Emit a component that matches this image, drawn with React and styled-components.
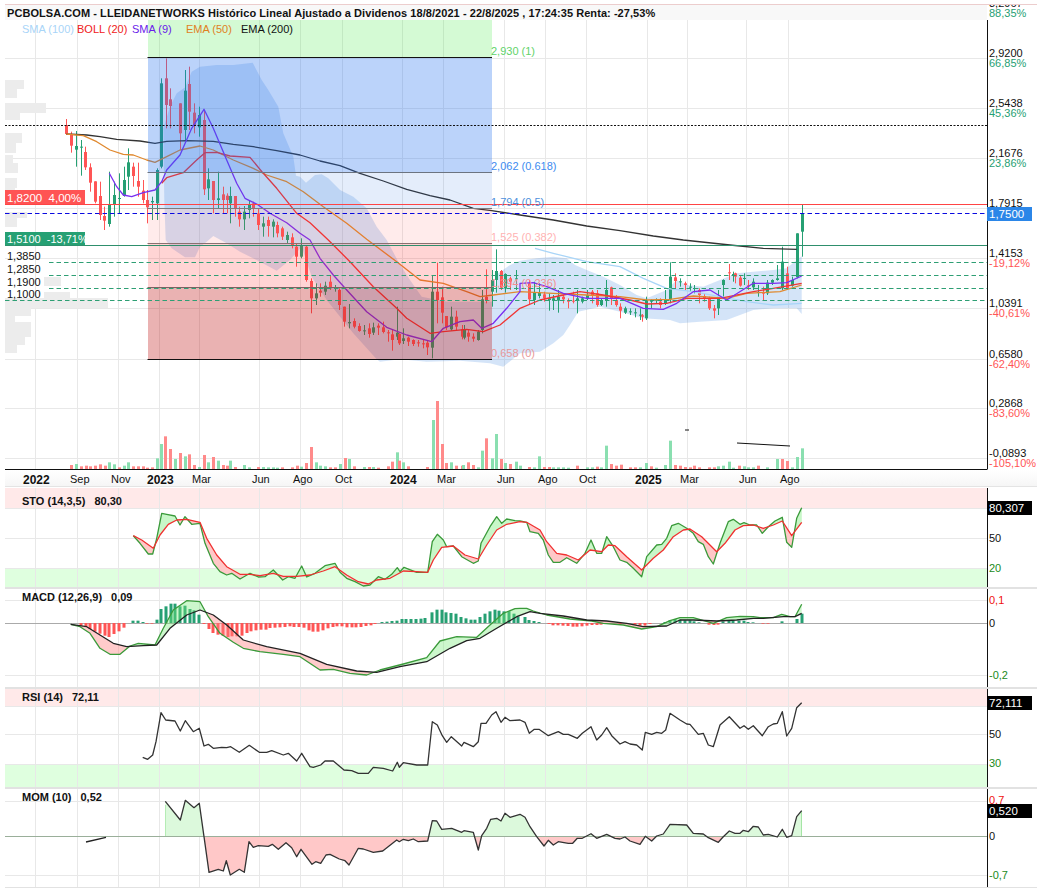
import React from "react";
import styled, { createGlobalStyle } from "styled-components";

const GREEN = "#26a073";
const RED = "#ff5555";
const GRID = "#e8e8e8";
const GRID_X = [35, 77, 118, 159, 199, 259, 300, 342, 402, 443, 504, 545, 586, 647, 687, 746, 788];
const AXIS_X = 987.5;

// traces were read off the picture at 3x, "x,y x,y ..." with an offset per block
const trace = (s, dx = 0, dy = 0) =>
    s
        .trim()
        .split(/\s+/)
        .map((p) => {
            const [x, y] = p.split(",").map(Number);
            return [(x + dx) / 3, (y + dy) / 3];
        });
const toPath = (pts) => pts.map((p, i) => (i ? "L" : "M") + p[0].toFixed(1) + " " + p[1].toFixed(1)).join("");
const at = (pts, x) => {
    if (x <= pts[0][0]) return pts[0][1];
    for (let i = 1; i < pts.length; i++) {
        if (x <= pts[i][0]) {
            const t = (x - pts[i - 1][0]) / (pts[i][0] - pts[i - 1][0] || 1);
            return pts[i - 1][1] + (pts[i][1] - pts[i - 1][1]) * t;
        }
    }
    return pts[pts.length - 1][1];
};

const candles = (s, dx = 0, dy = 0) =>
    s
        .trim()
        .split("\n")
        .map((l) => {
            const [c, x, top, bot, hi, lo] = l.trim().split(" ");
            return {
                color: c === "g" ? GREEN : RED,
                x: Math.round((+x + dx) / 3),
                top: (+top + dy) / 3,
                bot: (+bot + dy) / 3,
                hi: (+hi + dy) / 3,
                lo: (+lo + dy) / 3,
            };
        });

const CANDLES = [
    ...candles(`r 199 375 402 357 405
r 214 405 437 395 458
g 228 438 449 393 500
g 242 440 443 420 527
r 256 456 502 440 510
r 270 502 548 490 575
r 285 544 605 544 610
r 299 588 645 545 660
r 313 648 662 620 690
g 328 615 672 515 680
g 343 585 612 545 650
g 356 594 597 520 640
g 371 540 588 500 590
g 385 487 530 445 570
r 400 500 528 488 560
r 414 543 560 488 590
r 428 572 600 540 610
r 442 600 622 570 670
g 457 603 607 590 660
g 470 510 610 505 660
g 484 250 500 235 505
r 497 235 315 175 385
r 511 298 318 265 385
r 541 310 400 310 450
g 556 272 390 210 420
r 568 252 335 200 390
r 582 338 375 310 400
g 597 345 382 320 410
r 612 360 568 330 585
g 625 538 565 505 600
r 640 543 600 545 640
g 655 595 600 515 625
r 669 583 600 560 640
r 681 587 600 580 640
g 691 588 610 560 670
r 706 588 625 588 650
r 718 635 658 620 680
g 733 635 658 618 690
g 747 615 630 600 655
r 760 610 625 605 650
r 775 640 675 625 690
g 790 670 680 650 710
r 804 660 678 650 710
g 818 665 680 658 712
r 832 675 700 665 712
r 847 685 710 680 720
g 862 705 720 695 730
r 876 712 735 700 745`),
    ...candles(
        `r 888 20 50 10 80
g 904 15 50 -5 55
r 918 20 120 15 125
r 934 123 175 115 220
g 947 160 175 130 195
r 961 152 158 130 170
g 976 137 155 125 165
r 991 125 145 108 150
g 1004 144 147 135 155
r 1018 150 195 145 210
r 1033 200 245 200 260
g 1048 246 250 192 265
r 1063 243 260 235 265
r 1077 258 273 250 275
g 1091 271 273 255 285
r 1106 265 282 250 293
g 1120 262 278 248 285
r 1134 257 263 250 285
r 1148 262 276 245 280
r 1163 277 280 270 305
r 1177 283 300 270 332
g 1192 278 290 200 300
r 1198 282 310 280 315
g 1210 295 303 265 312
r 1225 293 305 290 318
r 1240 300 312 298 318
r 1254 307 310 300 320
r 1268 310 312 300 325
r 1282 308 322 300 345
g 1297 155 323 105 355
r 1312 155 180 68 250
r 1325 172 218 140 250
r 1339 228 262 228 270
g 1354 230 268 200 272
r 1368 230 260 212 270
r 1385 268 290 255 298
g 1392 270 293 255 298
r 1405 278 290 270 305
r 1420 290 296 280 305
g 1435 275 300 270 302
g 1445 178 270 150 280
r 1459 170 180 88 190
g 1475 120 155 90 200
g 1489 93 120 28 158
r 1504 93 143 90 150
g 1516 102 145 100 158
r 1531 115 125 110 150
g 1547 115 118 90 150`,
        0,
        720
    ),
    ...candles(
        `r 28 130 178 120 195
g 43 157 180 125 195
g 57 158 168 130 175
r 72 163 175 155 185
g 86 175 180 160 212
g 100 175 182 165 210
g 115 170 182 150 218
r 129 170 178 165 190
r 144 180 185 175 205
r 158 182 185 155 190
g 172 175 182 150 220
g 187 175 185 170 190
g 201 165 175 150 180
r 216 155 165 150 190
r 230 160 195 150 200
g 244 180 195 175 198
g 258 150 180 120 200
r 273 142 175 140 195
r 287 180 195 165 200
r 301 200 212 190 235
g 316 205 218 200 222
g 330 214 217 205 225
g 345 217 219 205 232
g 359 224 226 205 240
r 367 226 230 222 245
g 378 180 235 170 240
g 392 182 185 178 205
g 407 179 182 175 190
r 421 185 195 175 205
g 436 180 192 150 195
g 451 110 178 67 190
r 466 112 123 100 150
g 480 124 127 115 140
r 494 130 135 125 150
g 509 140 143 130 155
g 523 144 147 135 160
r 537 150 165 145 190
r 551 168 175 160 185
r 566 175 205 170 210
r 581 205 212 195 235
g 595 170 205 150 225
g 610 120 135 118 170
r 626 97 100 72 120
g 640 102 105 95 125
r 645 100 110 98 130
r 659 113 137 108 140
g 671 114 117 100 135
r 685 136 139 120 150
g 699 125 142 115 150
g 713 156 159 135 170
r 728 158 161 140 180
g 742 128 160 120 165
g 757 120 128 118 135
g 772 115 120 75 122
g 787 65 145 20 150
r 801 100 145 80 150
g 815 120 137 110 140
g 830 -20 112 -20 115
g 845 -80 -25 -107 50`,
        1560,
        720
    ),
];

const bars = (s, dx = 0) =>
    s
        .trim()
        .split(/\s+/)
        .map((b) => {
            const [c, x, h] = b.split(":");
            return { g: c === "g", x: Math.round((+x + dx) / 3), h: +h / 3 };
        });

const VOLUME = [
    ...bars(`r:214:12 g:229:15 r:243:8 r:257:10 r:271:8 r:286:10 r:300:14 r:314:10 g:328:20 g:343:14 r:357:5 g:371:10 g:385:20 r:400:8 r:414:8 r:428:8 r:442:4 r:457:5
g:470:32 g:484:75 r:496:98 r:511:60 g:526:30 r:541:48 g:556:38 r:568:44 r:583:12 g:597:6 r:612:42 g:625:20 r:640:36 g:655:25 r:669:12 r:680:10 g:691:25 r:706:6 g:733:12 g:747:5
r:775:6 g:790:6 g:804:5 g:818:5 g:832:4 r:847:5 r:876:5 r:890:10 g:904:7 r:918:18 r:934:66 g:947:20 g:961:10 g:976:8 r:991:5 r:1005:5 g:1019:15 r:1034:33 g:1048:30 r:1063:8
g:1092:6 r:1106:6 g:1120:6 r:1134:4 r:1163:8 r:1177:22 g:1192:50 r:1198:25 g:1210:20 r:1225:8 r:1282:6 g:1298:147 r:1312:204 r:1325:75 r:1339:18 g:1354:20 r:1368:10 r:1385:10 g:1390:12
r:1405:20 r:1420:12 g:1435:5 g:1445:55 r:1459:92 g:1475:32 g:1489:105 r:1504:30 g:1516:18 r:1531:15 g:1547:22`),
    ...bars(
        `g:0:10 r:28:6 g:43:5 g:57:38 r:72:6 r:86:6 g:100:5 g:115:5 g:130:5 g:144:4 r:172:10 g:201:5 g:216:5 r:230:7 g:244:5 g:259:70 r:273:15 r:287:10 r:302:13 r:330:5 r:345:5 g:359:5 g:377:18
r:392:8 g:407:4 g:436:12 g:451:85 r:466:12 r:480:10 r:494:6 r:509:5 r:523:10 r:537:5 r:566:5 r:581:5 g:595:8 g:610:10 g:626:22 g:640:4 r:656:10 g:671:8 g:685:5 g:699:5 r:714:10 g:742:5 g:772:30 r:787:30 r:801:24 g:815:5 g:830:36 g:845:62`,
        1560
    ),
];

const HIST = [
    ...bars(`r:243:8 r:257:12 r:271:18 r:286:26 r:300:32 r:314:38 r:328:42 r:343:33 r:357:25 r:371:14 g:400:7 g:414:7 g:428:3 r:442:2 r:457:2 g:470:10 g:484:42 g:498:50 g:512:58 g:526:58 g:540:50 g:555:52 g:569:42 g:583:38 g:597:25
r:612:3 r:626:18 r:640:30 r:655:35 r:669:38 r:683:42 r:697:40 r:711:40 r:725:38 r:740:30 r:754:25 r:768:22 r:783:20 r:797:20 r:811:15 r:826:14 r:840:13 r:855:12 r:869:10 r:883:12 r:897:12 r:911:14 r:926:22 r:940:26 r:955:26 r:969:22 r:983:16 r:998:12
r:1012:10 r:1026:10 r:1040:13 r:1055:13 r:1069:13 r:1083:12 r:1097:9 r:1112:7 r:1126:3 g:1147:3 g:1161:4 g:1175:6 g:1190:7 g:1205:12 g:1219:12 g:1233:12 g:1247:12 g:1262:13 g:1276:15 g:1297:32 g:1311:40 g:1325:40 g:1339:32 g:1353:30 g:1368:28 g:1383:18 g:1397:14 g:1412:10 g:1425:10 g:1440:18 g:1454:28 g:1469:35 g:1484:40 g:1498:37 g:1513:35 g:1527:35 g:1541:28 g:1555:20`),
    ...bars(
        `g:15:18 g:28:9 g:43:6 g:57:3 r:86:3 r:100:7 r:115:7 r:130:8 r:144:9 r:158:11 r:172:11 r:187:10 r:201:8 r:216:6 r:230:6 r:244:5 r:301:5 r:345:5 r:360:8 r:375:8 r:390:3 g:435:3 g:450:8 g:465:12 g:480:10 g:494:8 g:509:8 g:523:5 g:537:2 r:566:5 r:581:6 r:595:5 g:610:5 g:626:8 g:640:8 g:656:7 g:671:7 g:685:3 g:699:2 r:730:2 r:743:2 g:787:5 g:830:12 g:845:28`,
        1560
    ),
];

const BAND_UPPER = [
    ...trace("490,385 510,320 530,280 556,262 575,215 600,200 650,195 700,195 758,188 785,240 805,270 835,320 850,400 880,470 888,527 900,530 918,548 945,525 965,523 985,535 1020,570 1060,590 1100,625 1130,680 1160,720"),
    ...trace("1195,65 1230,120 1265,170 1340,185 1475,185 1495,100 1530,75 1560,62", 0, 720),
    ...trace("50,55 100,50 140,55 165,75 200,90 250,110 300,135 350,165 380,175 440,150 470,120 500,135 550,140 600,120 650,100 700,95 760,90 800,85 830,60 845,48", 1560, 720),
];
const BAND_LOWER = [
    ...trace("490,385 493,600 497,720"),
    ...trace("515,25 555,52 585,52 600,20 620,5 640,-12 680,10 720,35 780,65 830,92 870,60 905,20 935,110 980,180 1060,280 1130,358 1140,365 1200,358 1280,365 1380,362 1470,370 1510,380 1560,340", 0, 720),
    ...trace("60,335 100,310 130,285 150,255 175,215 240,200 300,215 370,235 450,240 480,250 540,245 620,240 660,225 700,210 760,205 800,205 830,205 845,222", 1560, 720),
];

const EMA200 = [
    ...trace("199,402 260,405 300,410 350,418 420,423 465,430 500,424 560,422 640,424 700,433 760,440 830,452 900,465 960,483 1020,497 1080,520 1150,543 1220,568 1290,587 1350,600 1420,625 1475,632 1560,645"),
    ...trace("100,660 200,678 300,692 400,708 490,720 630,735 730,745 830,748", 1560),
];
const EMA50 = [
    ...trace("199,402 250,407 290,425 330,450 370,463 400,465 440,480 465,487 500,470 540,450 600,438 640,450 700,480 760,505 800,525 860,545 910,575 970,620 1040,670 1100,718"),
    ...trace("1190,65 1260,120 1330,130 1400,155 1440,170 1480,165 1560,155", 0, 720),
    ...trace("100,160 200,165 300,170 380,180 450,178 520,168 620,175 680,160 780,155 845,135", 1560, 720),
];
const BOLL = [
    ...trace("485,550 500,533 550,518 590,480 615,458 650,457 690,468 750,472 790,520 830,565 890,640 930,668 985,720"),
    ...trace("1050,65 1120,140 1190,205 1220,235 1290,280 1330,275 1400,268 1450,275 1500,255 1560,205", 0, 720),
    ...trace("60,180 130,165 180,155 250,165 330,180 380,192 440,190 500,175 600,175 700,155 760,145 845,130", 1560, 720),
];
const SMA9 = [
    ...trace("328,520 350,560 370,585 395,590 430,578 465,570 485,545 500,510 540,465 575,385 612,328 640,385 680,480 710,550 735,595 770,612 810,640 860,668 900,700 930,720"),
    ...trace("960,55 1000,105 1040,150 1100,215 1160,262 1220,285 1295,305 1330,265 1380,245 1420,240 1445,265 1480,250 1520,205 1560,155", 0, 720),
    ...trace("0,130 40,128 80,140 130,160 200,175 300,175 370,205 430,208 470,190 520,155 570,150 620,180 700,130 760,130 800,128 845,108", 1560, 720),
];
const SMA100 = trace("45,25 100,40 200,65 300,80 370,115 440,145 520,155 600,170 680,185 760,195 845,190", 1560, 720);

const STO_FAST = [
    ...trace("400,152 420,175 445,207 458,207 470,160 485,85 500,88 525,93 540,120 555,95 575,118 600,115 615,175 640,235 660,260 680,270 695,265 720,282 750,265 775,276 795,275 820,255 848,285 865,275 885,280 905,243 920,276 945,265 975,242 1005,235 1020,262 1040,280 1065,290 1090,303 1110,300 1135,275 1155,283 1175,268 1192,248 1200,260 1212,247 1250,262 1283,262 1297,170 1312,148 1330,165 1340,185 1360,183 1385,215 1420,235 1435,228 1443,175 1470,125 1490,95 1505,115 1520,102 1545,107", 0, 1455),
    ...trace("0,108 20,112 30,140 55,145 70,165 85,210 100,232 120,232 140,218 170,235 195,205 213,165 230,205 245,205 260,155 280,185 300,225 320,232 340,250 365,275 380,215 410,180 425,178 440,160 455,122 475,115 500,130 520,145 535,170 550,178 565,215 580,237 600,175 625,110 640,103 660,118 672,113 690,120 710,120 727,145 745,125 765,108 787,97 800,172 815,187 830,100 845,68", 1560, 1455),
];
const STO_SLOW = [
    ...trace("400,152 425,165 460,190 480,150 505,118 530,105 560,103 600,112 620,160 650,210 680,245 720,268 750,268 780,272 820,265 850,274 890,274 930,270 970,258 1005,245 1040,270 1075,290 1105,297 1130,285 1170,280 1210,258 1250,260 1283,262 1300,225 1325,187 1360,183 1395,210 1435,222 1460,180 1490,135 1520,118", 0, 1455),
    ...trace("0,110 20,112 60,135 80,170 110,205 140,210 175,225 210,195 245,200 265,180 285,182 320,215 365,255 400,220 430,195 460,155 490,135 510,132 545,155 590,200 615,175 645,135 670,122 700,120 730,130 760,120 787,108 815,152 845,112", 1560, 1455),
];
const MACD_LINE = [
    ...trace("212,418 240,425 270,445 300,490 330,508 360,508 390,483 415,475 465,480 490,430 520,375 560,347 600,350 625,395 660,445 700,472 730,490 780,500 850,508 900,515 960,555 1000,553 1050,565 1100,570 1140,555 1210,537 1280,518 1320,468 1370,455 1430,457 1470,420 1510,385 1545,371", 0, 1455),
    ...trace("0,370 20,370 40,378 80,390 150,402 215,408 250,415 310,420 365,432 410,425 450,407 480,398 520,398 580,415 620,398 660,394 700,395 720,398 760,398 785,388 810,395 825,395 845,358", 1560, 1455),
];
const MACD_SIGNAL = [
    ...trace("212,418 260,425 300,450 340,475 380,485 430,482 470,480 510,430 560,390 600,375 640,390 680,420 730,465 800,485 900,505 980,538 1070,558 1130,562 1200,545 1280,530 1350,490 1400,467 1440,460 1490,430 1550,395", 0, 1455),
    ...trace("30,380 60,385 130,393 200,405 260,408 320,415 370,425 440,423 480,405 520,405 590,408 650,405 700,400 730,400 790,395 825,395 845,385", 1560, 1455),
];
const RSI_LINE = [
    ...trace("428,217 443,223 458,210 468,170 483,83 497,105 525,108 541,138 556,107 580,140 598,130 612,183 625,178 640,190 665,187 680,188 692,185 718,202 748,181 778,202 800,202 815,197 850,210 865,205 890,228 905,205 930,245 940,247 962,240 975,228 1000,228 1032,255 1055,257 1075,265 1105,265 1120,247 1150,250 1178,258 1192,232 1198,247 1210,233 1250,240 1283,240 1297,110 1312,120 1327,152 1340,172 1354,155 1385,183 1392,172 1420,185 1435,170 1443,115 1458,115 1475,90 1488,80 1503,112 1515,97 1530,107", 0, 2055),
    ...trace("0,105 15,112 28,145 43,133 57,133 85,152 115,140 130,148 145,148 172,160 187,145 213,125 230,165 245,150 260,128 275,152 300,177 315,170 330,177 350,180 367,195 376,142 395,148 410,142 425,145 437,135 450,85 480,105 500,117 510,118 535,148 550,145 565,180 580,185 600,120 628,95 660,130 672,122 685,133 700,122 727,152 745,125 760,117 772,115 787,80 800,153 815,130 830,68 845,53", 1560, 2055),
];
const MOM_LINE = [
    ...trace("496,349 541,405 556,346 582,368 598,355 612,455 627,562 655,553 670,558 679,527 691,570 718,553 733,562 747,470 760,487 775,482 805,484 817,478 835,493 858,473 875,488 890,515 903,493 936,538 947,530 962,535 978,510 990,508 1018,522 1035,527 1047,540 1075,490 1090,492 1120,502 1148,498 1190,465 1198,470 1210,463 1225,467 1240,462 1255,470 1283,468 1297,407 1310,408 1325,433 1355,430 1385,442 1392,437 1420,442 1435,495 1445,452 1460,430 1472,403 1490,400 1503,408 1515,385 1530,397", 0, 2055),
    ...trace("0,388 15,397 30,425 50,455 72,483 85,466 100,480 115,470 145,475 158,475 172,460 187,460 213,446 230,460 260,448 285,460 300,462 315,456 330,468 360,478 376,454 395,468 410,453 430,447 450,418 500,420 520,445 550,447 565,458 595,472 610,455 628,438 645,445 660,445 670,436 685,440 700,424 715,426 730,450 745,448 772,456 787,433 800,457 815,452 830,395 845,377", 1560, 2055),
];

const PROFILE = [
    [80, 89, 19], [89, 98, 12], [103, 113, 41], [113, 120, 15], [133, 143, 17], [143, 153, 11], [155, 163, 8], [163, 173, 13], [178, 188, 12], [188, 198, 10], [212, 218, 22], [218, 227, 12],
    [298, 308, 103], [307, 316, 26], [316, 322, 10], [322, 330, 26], [330, 337, 26], [337, 345, 20], [345, 353, 12],
];
const PROFILE_EXTRA = [[277, 286, 44, 61], [292, 299, 44, 70]];

const ZONES = [
    { y: 20, h: 38, fill: "rgba(50,230,50,.21)" },
    { y: 58, h: 115, fill: "rgba(30,110,240,.3)" },
    { y: 173, h: 35, fill: "rgba(30,110,220,.12)" },
    { y: 208, h: 36, fill: "rgba(255,60,60,.1)" },
    { y: 244, h: 44, fill: "rgba(255,40,40,.2)" },
    { y: 288, h: 71, fill: "rgba(190,20,20,.33)" },
];
const FIB_LEVELS = [
    { y: 57.5, color: "#111" },
    { y: 172.5, color: "#6c7480" },
    { y: 208.5, color: "#7c7c80" },
    { y: 243.5, color: "#8a7070" },
    { y: 287.5, color: "#7d6262" },
    { y: 359.5, color: "#111" },
];
const FIB_LABELS = [
    { y: 55, text: "2,930 (1)", color: "#5fd36a" },
    { y: 170, text: "2,062 (0.618)", color: "#3d8bf0" },
    { y: 206, text: "1,794 (0.5)", color: "#4d8fdc" },
    { y: 241, text: "1,525 (0.382)", color: "#ffb3b3" },
    { y: 287, text: "1,394 (0.236)", color: "#f58f8f" },
    { y: 357, text: "0,658 (0)", color: "#e89898" },
];
const PRICE_AXIS = [
    { y: 57, price: "2,9200", pct: "66,85%", up: true },
    { y: 107, price: "2,5438", pct: "45,36%", up: true },
    { y: 157, price: "2,1676", pct: "23,86%", up: true },
    { y: 207, price: "1,7915" },
    { y: 257, price: "1,4153", pct: "-19,12%" },
    { y: 307, price: "1,0391", pct: "-40,61%" },
    { y: 358, price: "0,6580", pct: "-62,40%" },
    { y: 407, price: "0,2868", pct: "-83,60%" },
    { y: 457, price: "-0,0893", pct: "-105,10%" },
];
const LEFT_LEVELS = [
    { y: 260, text: "1,3850" },
    { y: 273, text: "1,2850" },
    { y: 286, text: "1,1900" },
    { y: 298, text: "1,1000" },
];
const LEGEND = [
    { text: "SMA (100)", color: "#a9d5f8", w: 55 },
    { text: "BOLL (20)", color: "#f02020", w: 55 },
    { text: "SMA (9)", color: "#6a1bea", w: 54 },
    { text: "EMA (50)", color: "#e0801f", w: 55 },
    { text: "EMA (200)", color: "#111", w: 60 },
];
const MONTHS = [
    { x: 23, t: "2022", b: 1 }, { x: 70, t: "Sep" }, { x: 111, t: "Nov" }, { x: 147, t: "2023", b: 1 }, { x: 192, t: "Mar" }, { x: 252, t: "Jun" },
    { x: 293, t: "Ago" }, { x: 335, t: "Oct" }, { x: 390, t: "2024", b: 1 }, { x: 437, t: "Mar" }, { x: 497, t: "Jun" }, { x: 538, t: "Ago" },
    { x: 579, t: "Oct" }, { x: 635, t: "2025", b: 1 }, { x: 680, t: "Mar" }, { x: 739, t: "Jun" }, { x: 780, t: "Ago" },
];

const Global = createGlobalStyle`
    html, body { margin: 0; background: #fff; }
    body { font-family: "Liberation Sans", Arial, sans-serif; }
`;

const Page = styled.div`
    width: 1032px;
    margin: 4px 0 0 5px;
    border-top: 1px solid #eccdcd;
`;
const TitleRow = styled.div`
    display: flex;
    height: 15px;
`;
const TitleBar = styled.div`
    flex: 0 0 982px;
    background: #f8f8f8;
    color: #111;
    font-size: 11px;
    font-weight: 700;
    line-height: 16px;
    padding-left: 2px;
    box-sizing: border-box;
    white-space: nowrap;
    letter-spacing: 0.06px;
`;
const AxisCap = styled.div`
    flex: 1;
    overflow: hidden;
    padding-left: 2px;
    font-size: 11px;
    line-height: 10px;
    div:first-child { margin-top: -7px; color: #111; }
    div:last-child { color: ${GREEN}; }
`;
const Pane = styled.div`
    position: relative;
    height: ${(p) => p.$h}px;
    margin-top: ${(p) => p.$gap || 0}px;
`;
const Plot = styled.svg`
    display: block;
    width: 1032px;
    height: 100%;
`;
const Legend = styled.div`
    position: absolute;
    left: 17px;
    top: 2px;
    display: flex;
    font-size: 11px;
    line-height: 14px;
`;
const LegendItem = styled.span`
    width: ${(p) => p.$w}px;
    color: ${(p) => p.$color};
    white-space: nowrap;
`;
const Strip = styled.div`
    height: 17px;
    background: linear-gradient(#fff, #f6f6f6);
    border-bottom: 1px solid #e4e4e4;
    box-sizing: border-box;
`;
const PaneHeader = styled.div`
    position: absolute;
    left: 17px;
    top: ${(p) => p.$top}px;
    display: flex;
    gap: 9px;
    color: #111;
    font-size: 11px;
    font-weight: 700;
    line-height: 14px;
`;
const Label = styled.text`
    font-family: "Liberation Sans", Arial, sans-serif;
    font-size: ${(p) => p.$size || 11}px;
    font-weight: ${(p) => (p.$bold ? 700 : 400)};
    fill: ${(p) => p.$color || "#111"};
`;
const Stack = styled.div`
    background: #e2e2e2;
    border-bottom: 1px solid #e2e2e2;
`;
const IndicatorPane = styled(Pane)`
    background: #fff;
`;

const Grid = ({ top, bottom, rows }) => (
    <g stroke={GRID} strokeWidth="1">
        {GRID_X.map((x) => (
            <line key={x} x1={x + 0.5} x2={x + 0.5} y1={top} y2={bottom} />
        ))}
        {rows.map((y) => (
            <line key={y} x1="5" x2={AXIS_X} y1={y + 0.5} y2={y + 0.5} />
        ))}
    </g>
);

// fills between two traces: one polygon per run of the same sign
const Ribbon = ({ a, b, up, down }) => {
    const from = Math.max(a[0][0], b[0][0]);
    const to = Math.min(a[a.length - 1][0], b[b.length - 1][0]);
    const runs = [];
    let run = null;
    for (let x = from; x <= to + 0.5; x += 0.5) {
        const ya = at(a, x);
        const yb = at(b, x);
        const isUp = ya <= yb;
        if (!run || run.up !== isUp) {
            run = { up: isUp, top: [], bot: [] };
            runs.push(run);
        }
        run.top.push([x, ya]);
        run.bot.unshift([x, yb]);
    }
    return runs.map((r, i) => <path key={i} d={toPath([...r.top, ...r.bot]) + "Z"} fill={r.up ? up : down} />);
};

const Line = ({ pts, color, w = 1.3 }) => <path d={toPath(pts)} fill="none" stroke={color} strokeWidth={w} strokeLinejoin="round" />;

const ValueTag = ({ y, h = 14, text, bg = "#000" }) => (
    <g>
        <rect x="987" y={y} width="45" height={h} fill={bg} />
        <Label x="989" y={y + h - 3} $color="#fff" $size={11.5}>
            {text}
        </Label>
    </g>
);
const AxisLine = ({ top, bottom }) => <line x1={AXIS_X} x2={AXIS_X} y1={top} y2={bottom} stroke="#111" strokeWidth="1" />;

const MainChart = () => (
    <Plot viewBox="5 20 1032 450">
        <Grid top={20} bottom={469} rows={[58, 108, 158, 208, 258, 308, 359, 408, 458]} />
        {VOLUME.map((b, i) => (
            <rect key={i} x={b.x - 1} y={469 - b.h} width="3" height={b.h} fill={b.g ? "#8adfb0" : "#ff8a8a"} />
        ))}
        <g fill="#ececec">
            {PROFILE.map(([t, b, w], i) => (
                <rect key={i} x="5" y={t} width={w} height={b - t} />
            ))}
            {PROFILE_EXTRA.map(([t, b, x, r], i) => (
                <rect key={i} x={x} y={t} width={r - x} height={b - t} />
            ))}
        </g>
        <path d={toPath([...BAND_UPPER, ...[...BAND_LOWER].reverse()]) + "Z"} fill="rgba(60,130,225,.22)" />
        {CANDLES.map((c, i) => (
            <g key={i} fill={c.color}>
                <rect x={c.x} y={c.hi} width="1" height={c.lo - c.hi} />
                <rect x={c.x - 1} y={c.top} width="3" height={Math.max(c.bot - c.top, 1)} />
            </g>
        ))}
        <Line pts={SMA100} color="#a9d5f8" />
        <Line pts={EMA200} color="#333" />
        <Line pts={EMA50} color="#e0892f" />
        <Line pts={BOLL} color="#f03535" />
        <Line pts={SMA9} color="#7a2ff0" />
        {ZONES.map((z) => (
            <rect key={z.y} x="148" y={z.y} width="344" height={z.h} fill={z.fill} />
        ))}
        {FIB_LEVELS.map((l) => (
            <line key={l.y} x1="147.5" x2="492" y1={l.y} y2={l.y} stroke={l.color} strokeWidth="1" />
        ))}
        <g strokeWidth="1">
            <line x1="5" x2={AXIS_X} y1="125.5" y2="125.5" stroke="#111" strokeDasharray="2 1.5" />
            <line x1="5" x2={AXIS_X} y1="204.5" y2="204.5" stroke="#f44" />
            <line x1="5" x2={AXIS_X} y1="213.5" y2="213.5" stroke="#0a0ae0" strokeDasharray="4.5 3" />
            <line x1="5" x2={AXIS_X} y1="245.5" y2="245.5" stroke="#2e8f6c" />
            {[262.5, 275.5, 288.5].map((y) => (
                <line key={y} x1="49" x2={AXIS_X} y1={y} y2={y} stroke="#2e9f74" strokeDasharray="4.5 3" />
            ))}
            <line x1="5" x2={AXIS_X} y1="300.5" y2="300.5" stroke="#2e9f74" strokeDasharray="4.5 3" />
        </g>
        <g stroke="#111" strokeWidth="1">
            <line x1="685" x2="689" y1="430" y2="430" />
            <line x1="737" x2="790" y1="443" y2="446" />
        </g>
        {FIB_LABELS.map((l) => (
            <Label key={l.y} x="491" y={l.y} $color={l.color}>
                {l.text}
            </Label>
        ))}
        {LEFT_LEVELS.map((l) => (
            <Label key={l.y} x="7" y={l.y}>
                {l.text}
            </Label>
        ))}
        <rect x="5" y="190" width="80" height="14" fill="#ff5454" />
        <Label x="7" y="201.5" $color="#fff" $size={11.5}>
            {"1,8200\u00a0\u00a04,00%"}
        </Label>
        <rect x="5" y="232" width="80" height="13" fill={GREEN} />
        <Label x="7" y="243" $color="#fff" $size={11}>
            {"1,5100\u00a0\u00a0-13,71%"}
        </Label>
        <line x1="5" x2={AXIS_X} y1="469.5" y2="469.5" stroke="#111" strokeWidth="1" />
        <AxisLine top={20} bottom={469} />
        {PRICE_AXIS.map((a) => (
            <g key={a.y}>
                <Label x="989" y={a.y}>
                    {a.price}
                </Label>
                {a.pct && (
                    <Label x="989" y={a.y + 10} $color={a.up ? GREEN : RED}>
                        {a.pct}
                    </Label>
                )}
            </g>
        ))}
        <ValueTag y={207} text="1,7500" bg="#2b86e8" />
    </Plot>
);

const XAxis = () => (
    <Plot viewBox="5 470 1032 16">
        {MONTHS.map((m) => (
            <Label key={m.x} x={m.x} y={m.b ? 484 : 483} $bold={m.b} $size={m.b ? 12 : 11}>
                {m.t}
            </Label>
        ))}
    </Plot>
);

const StoChart = () => (
    <Plot viewBox="5 488 1032 99">
        <rect x="5" y="488" width="982" height="20" fill="#ffe9e9" />
        <rect x="5" y="568" width="982" height="19" fill="#dfffdf" />
        <Grid top={488} bottom={587} rows={[508, 538, 568]} />
        <Ribbon a={STO_FAST} b={STO_SLOW} up="#c8f7c8" down="#ffc8c8" />
        <Line pts={STO_FAST} color="#3a9a3a" />
        <Line pts={STO_SLOW} color="#f03030" />
        <AxisLine top={488} bottom={587} />
        <ValueTag y={501} text="80,307" />
        <Label x="989" y={542}>50</Label>
        <Label x="989" y={572} $color="#1a8a1a">20</Label>
    </Plot>
);

const MacdChart = () => (
    <Plot viewBox="5 589 1032 98">
        <Grid top={589} bottom={687} rows={[600, 675]} />
        <line x1="5" x2={AXIS_X} y1="623.5" y2="623.5" stroke="#aaa" strokeWidth="1" />
        {HIST.map((b, i) => (
            <rect key={i} x={b.x - 1.5} y={b.g ? 623 - b.h : 623} width="3" height={b.h} fill={b.g ? GREEN : RED} />
        ))}
        <Ribbon a={MACD_LINE} b={MACD_SIGNAL} up="rgba(120,235,120,.38)" down="rgba(255,130,130,.42)" />
        <Line pts={MACD_LINE} color="#3a9a3a" />
        <Line pts={MACD_SIGNAL} color="#222" />
        <AxisLine top={589} bottom={687} />
        <Label x="989" y={604} $color="#f01010">0,1</Label>
        <Label x="989" y={627}>0</Label>
        <Label x="989" y={679} $color="#1a8a1a">-0,2</Label>
    </Plot>
);

const RsiChart = () => (
    <Plot viewBox="5 689 1032 98">
        <rect x="5" y="689" width="982" height="17" fill="#ffe9e9" />
        <rect x="5" y="764" width="982" height="23" fill="#dfffdf" />
        <Grid top={689} bottom={787} rows={[706, 734, 764]} />
        <Line pts={RSI_LINE} color="#333" />
        <AxisLine top={689} bottom={787} />
        <ValueTag y={696} text="72,111" />
        <Label x="989" y={738}>50</Label>
        <Label x="989" y={767} $color="#1a8a1a">30</Label>
    </Plot>
);

const MOM_ZERO = [[165, 836.5], [802, 836.5]];

const MomChart = () => (
    <Plot viewBox="5 789 1032 98">
        <Grid top={789} bottom={887} rows={[801, 875]} />
        <Ribbon a={MOM_LINE} b={MOM_ZERO} up="#dcf9dc" down="#ffc8c8" />
        <line x1="165.5" x2="165.5" y1="805" y2="836" stroke="#b5ecb5" strokeWidth="1" />
        <line x1="801.5" x2="801.5" y1="811" y2="836" stroke="#a5e5a5" strokeWidth="1" />
        <line x1="5" x2={AXIS_X} y1="836.5" y2="836.5" stroke="#9aaf9a" strokeWidth="1" />
        <Line pts={trace("258,471 318,457", 0, 2055)} color="#222" />
        <Line pts={MOM_LINE} color="#333" />
        <AxisLine top={789} bottom={887} />
        <Label x="989" y={804} $color="#f01010">0,7</Label>
        <ValueTag y={804} text="0,520" />
        <Label x="989" y={840}>0</Label>
        <Label x="989" y={879} $color="#1a8a1a">-0,7</Label>
    </Plot>
);

const INDICATORS = [
    { key: "sto", gap: 1, h: 99, Chart: StoChart, head: ["STO (14,3,5)", "80,30"], top: 6 },
    { key: "macd", gap: 2, h: 98, Chart: MacdChart, head: ["MACD (12,26,9)", "0,09"], top: 1 },
    { key: "rsi", gap: 2, h: 98, Chart: RsiChart, head: ["RSI (14)", "72,11"], top: 1 },
    { key: "mom", gap: 2, h: 98, Chart: MomChart, head: ["MOM (10)", "0,52"], top: 1 },
];

export default function App() {
    return (
        <Page>
            <Global />
            <TitleRow>
                <TitleBar>
                    PCBOLSA.COM - LLEIDANETWORKS Histórico Lineal Ajustado a Dividenos 18/8/2021 - 22/8/2025 , 17:24:35 Renta: -27,53%
                </TitleBar>
                <AxisCap>
                    <div>3,2967</div>
                    <div>88,35%</div>
                </AxisCap>
            </TitleRow>
            <Pane $h={450}>
                <MainChart />
                <Legend>
                    {LEGEND.map((l) => (
                        <LegendItem key={l.text} $color={l.color} $w={l.w}>
                            {l.text}
                        </LegendItem>
                    ))}
                </Legend>
            </Pane>
            <Strip>
                <XAxis />
            </Strip>
            <Stack>
                {INDICATORS.map(({ key, gap, h, Chart, head, top }) => (
                    <IndicatorPane key={key} $gap={gap} $h={h}>
                        <Chart />
                        <PaneHeader $top={top}>
                            <span>{head[0]}</span>
                            <span>{head[1]}</span>
                        </PaneHeader>
                    </IndicatorPane>
                ))}
            </Stack>
        </Page>
    );
}
